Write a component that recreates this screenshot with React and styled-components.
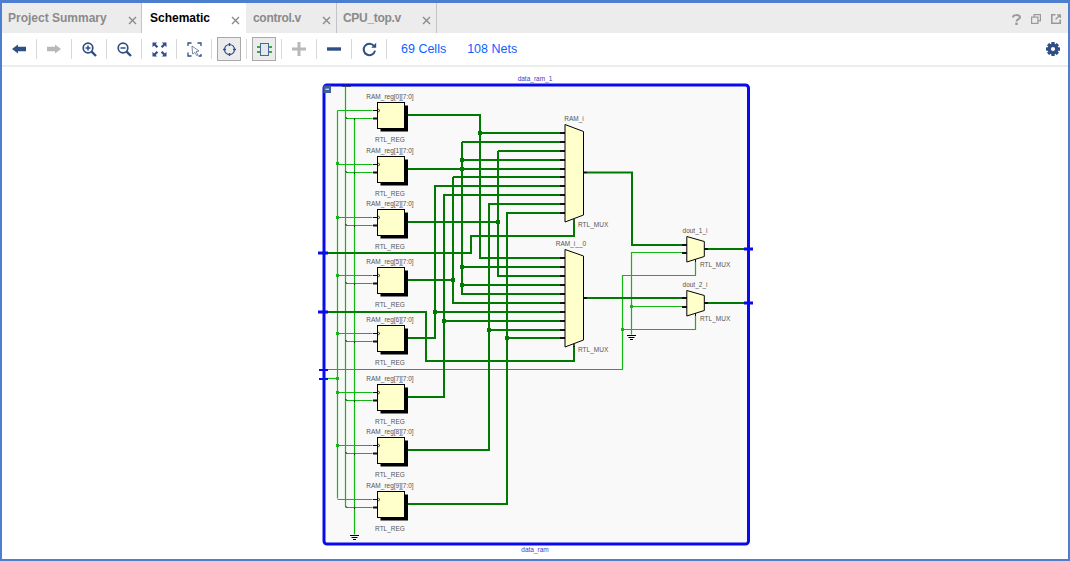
import React from "react";
import styled, { createGlobalStyle } from "styled-components";

const Global = createGlobalStyle`
  html, body { margin: 0; padding: 0; background: #fff; }
  body { font-family: "Liberation Sans", Arial, sans-serif; }
`;
const Frame = styled.div`
  width: 1070px; height: 561px; box-sizing: border-box; overflow: hidden;
  border-top: 3px solid #4d7fcf; border-left: 2px solid #4d7fcf; border-right: 2px solid #4d7fcf; border-bottom: 2px solid #4d7fcf;
  display: flex; flex-direction: column; background: #fff;
`;
const TabBar = styled.div`
  height: 30px; flex: none; background: #ececec; display: flex; align-items: stretch; padding-right: 7px;
`;
const Tab = styled.div`
  display: flex; align-items: center; justify-content: space-between; box-sizing: border-box;
  width: ${p => p.$w}px; padding: 0 ${p => p.$pr}px 0 ${p => p.$pad}px; height: 30px;
  background: ${p => p.$active ? "#fff" : "transparent"};
  border-right: ${p => p.$active ? "none" : "1px solid #c4c4c4"};
  font-size: 12px; font-weight: 700; color: ${p => p.$active ? "#000" : "#8a8a8a"};
  letter-spacing: ${p => p.$ls || 0}px;
`;
const TabClose = styled.svg`
  width: 9px; height: 9px; margin-top: 5px; stroke: #8a8a8a; stroke-width: 1.4; fill: none;
`;
const TabSpacer = styled.div`flex: 1;`;
const WindowIcons = styled.div`display: flex; align-items: center; gap: 10px; padding-top: 2px;`;
const Toolbar = styled.div`
  height: 34px; flex: none; background: #fff; display: flex; align-items: center; padding: 0 8px 0 0;
  border-bottom: 2px solid #ededed; box-sizing: border-box;
`;
const ToolButton = styled.div`
  width: 24px; height: 24px; box-sizing: border-box; margin: 0 5px; flex: none;
  display: flex; align-items: center; justify-content: center;
  ${p => p.$on ? "background:#ececec;border:1px solid #a9a9a9;" : ""}
`;
const Sep = styled.div`width: 1px; height: 20px; background: #d8d8d8; flex: none;`;
const Count = styled.span`font-size: 12.5px; color: #0f5fff; margin-left: ${p => p.$ml}px;`;
const Grow = styled.div`flex: 1;`;
const Canvas = styled.div`flex: 1; min-height: 0; background: #fff;`;
const Schematic = styled.svg`display: block; width: 1066px; height: 492px; overflow: hidden;`;
const ArrowSvg = styled.svg`
  display: block;
  transform: ${p => p.$flip ? "scaleX(-1)" : "none"};
`;

const NAVY = "#2f4f85";
const Arrow = ({ c, flip }) => (
  <ArrowSvg $flip={flip} width="14" height="10" viewBox="0 0 14 10">
    <path d="M0 5 L6 0.5 V2.8 H14 V7.2 H6 V9.5 Z" fill={c} />
  </ArrowSvg>
);
const Zoom = ({ plus }) => (
  <svg width="15" height="15" viewBox="0 0 15 15" fill="none" stroke={NAVY}>
    <circle cx="6" cy="6" r="4.8" strokeWidth="1.7" />
    <path d="M9.6 9.6 L14 14" strokeWidth="2.4" />
    <path d={plus ? "M3.5 6H8.5M6 3.5V8.5" : "M3.5 6H8.5"} strokeWidth="1.5" />
  </svg>
);
const Fit = () => (
  <svg width="15" height="15" viewBox="0 0 15 15" fill={NAVY}>
    <path d="M0.5 0.5H5.2L3.7 2L6.2 4.5L4.6 6.1L2.1 3.6L0.5 5.2Z" />
    <path d="M14.5 0.5H9.8L11.3 2L8.8 4.5L10.4 6.1L12.9 3.6L14.5 5.2Z" />
    <path d="M0.5 14.5H5.2L3.7 13L6.2 10.5L4.6 8.9L2.1 11.4L0.5 9.8Z" />
    <path d="M14.5 14.5H9.8L11.3 13L8.8 10.5L10.4 8.9L12.9 11.4L14.5 9.8Z" />
  </svg>
);
const FitSel = () => (
  <svg width="15" height="15" viewBox="0 0 15 15" fill="none" stroke={NAVY} strokeWidth="1.3">
    <path d="M1 4V1H4.5M10.5 1H14V4M1 10.5V14H4.5M14 12V14H11.5" />
    <path d="M5 4 L12 9 L9 9.6 L11 13 L9.6 13.6 L7.8 10.4 L5.6 12 Z" strokeWidth="0.8" stroke="#5a6d8c" fill="#fff" />
  </svg>
);
const Target = () => (
  <svg width="15" height="15" viewBox="0 0 15 15" fill="none" stroke={NAVY}>
    <circle cx="7.5" cy="7.5" r="5" strokeWidth="1.1" />
    <path d="M7.5 1V4M7.5 11V14M1 7.5H4M11 7.5H14" strokeWidth="1.5" />
  </svg>
);
const Cell = () => (
  <svg width="15" height="13" viewBox="0 0 15 13">
    <path d="M0 4H4M0 9H4M11 4H15M11 9H15" stroke="#2fb02f" strokeWidth="2.2" fill="none" />
    <rect x="3.5" y="0.5" width="8" height="12" fill="#e4e9ef" stroke="#4a6a94" strokeWidth="1" />
  </svg>
);
const Plus = () => (
  <svg width="14" height="14" viewBox="0 0 14 14"><path d="M0 7H14M7 0V14" stroke="#b8b8b8" strokeWidth="3" /></svg>
);
const Minus = () => (
  <svg width="14" height="14" viewBox="0 0 14 14"><path d="M0 7H14" stroke={NAVY} strokeWidth="3.4" /></svg>
);
const Reload = () => (
  <svg width="15" height="15" viewBox="0 0 15 15" fill="none">
    <path d="M12.2 4.3 A5.7 5.7 0 1 0 13 8.6" stroke={NAVY} strokeWidth="2" />
    <path d="M9.2 5.8 H14.2 V0.8 Z" fill={NAVY} />
  </svg>
);
const Gear = () => (
  <svg width="14" height="14" viewBox="0 0 14 14">
    <circle cx="7" cy="7" r="3.9" fill="none" stroke={NAVY} strokeWidth="3" />
    {[0, 45, 90, 135].map(a => (
      <rect key={a} x="5.3" y="0" width="3.4" height="14" rx="0.5" fill={NAVY} transform={`rotate(${a} 7 7)`} />
    ))}
    <circle cx="7" cy="7" r="2.1" fill="#fff" />
  </svg>
);
const Help = () => (
  <svg width="9" height="11" viewBox="0 0 9 11" fill="none" stroke="#999">
    <path d="M1 3.4 C1 0.4 8 0.4 8 3.2 C8 5.2 4.5 5 4.5 7.4" strokeWidth="2" />
    <rect x="3.3" y="8.6" width="2.4" height="2.4" fill="#999" stroke="none" />
  </svg>
);
const Restore = () => (
  <svg width="10" height="10" viewBox="0 0 10 10" fill="#ececec" stroke="#999" strokeWidth="1.2">
    <rect x="3.1" y="0.6" width="6.3" height="6.3" />
    <rect x="0.6" y="3.1" width="6.3" height="6.3" />
  </svg>
);
const Popout = () => (
  <svg width="10" height="10" viewBox="0 0 10 10" fill="none" stroke="#999" strokeWidth="1.6">
    <path d="M4.5 0.8H0.8V9.2H9.2V5.5" />
    <path d="M4.5 5.5L9 1M6 0.8H9.3V4" strokeWidth="1.3" />
  </svg>
);

const THICK = "#007a00";
const THIN = "#12b812";
const BLUE = "#0a0aee";
const regs = [
  { t: 102, n: 0, out: "M407 115H480V258H560" },
  { t: 156, n: 1, out: "M407 169H560" },
  { t: 209, n: 2, out: "M407 222H498" },
  { t: 267, n: 5, out: "M407 280H453" },
  { t: 325, n: 6, out: "M407 338H435V186H560" },
  { t: 384, n: 7, out: "M407 397H444V195H560" },
  { t: 437, n: 8, out: "M407 450H489V204H560" },
  { t: 491, n: 9, out: "M407 504H507V213H560" },
];
const thickWires = [
  "M462 160H560", "M462 142H560", "M462 142V294H560", "M462 267H560", "M462 285H560",
  "M498 151H560", "M498 151V276H560", "M453 177H560", "M453 177V303H560",
  "M480 133H560", "M435 312H560", "M444 321H560", "M489 330H560", "M507 338H560",
  "M322 253H471V236H574V222", "M322 312H426V361H574V346",
  "M587 172.5H632V245H683", "M587 298H683", "M708 249H748", "M708 303H748",
];
const thickDots = [[480,133],[462,160],[462,169],[498,222],[453,280],[462,267],[462,285],[435,312],[444,321],[489,330],[507,338]];
const thinWires = [
  "M338 111V499", "M346 86V507", "M355 119V535",
  "M324 379H338", "M324 370H623V276H696V262", "M623 330H696V316",
  "M632 335V253H683", "M632 307H683",
];
const thinDots = [[338,164],[338,218],[338,276],[338,334],[338,393],[338,446],[338,379],[632,307],[623,330]];
const muxes = [
  { pts: "565,124.5 583.5,131.5 583.5,215 565,222", ins: [133,142,151,160,169,177,186,195,204,213], oy: 172.5, sy: 219 },
  { pts: "565,249.5 583.5,256 583.5,340 565,347", ins: [258,267,276,285,294,303,312,321,330,338], oy: 298, sy: 344 },
];
const smallMuxes = [
  { pts: "686.8,236.5 704.3,241.5 704.3,256.5 686.8,262", ins: [245,253], oy: 249, sy: 259 },
  { pts: "686.8,290.5 704.3,295.5 704.3,310.5 686.8,316", ins: [298,307], oy: 303, sy: 313 },
];
const Label = styled.text`
  font-family: "Liberation Sans", Arial, sans-serif; font-size: 6.5px; fill: ${p => p.$c || "#555"};
  text-anchor: ${p => p.$a || "middle"};
`;
const Ground = ({ x, y }) => (
  <path d={`M${x - 5} ${y + 0.5}H${x + 4}M${x - 3.5} ${y + 2.5}H${x + 2.5}M${x - 2} ${y + 4.5}H${x + 1}`} stroke="#000" strokeWidth="1" fill="none" />
);
const Sq = ({ x, y, c, s }) => <rect x={x - s / 2} y={y - s / 2} width={s} height={s} fill={c} />;

const Drawing = () => (
  <Schematic viewBox="2 67 1066 492">
    <rect x="324" y="85" width="424.5" height="459" rx="3" fill="#f9f9f9" stroke={BLUE} strokeWidth="3" />
    <rect x="323.5" y="85.5" width="7.5" height="7.5" fill="#3d5f9e" />
    <path d="M325.5 89.2H329" stroke="#fff" strokeWidth="1" />
    <Label x="535" y="81" $c="#3c3ccc">data_ram_1</Label>
    <Label x="535" y="552" $c="#3c3ccc">data_ram</Label>

    <g fill="none" stroke={THIN} strokeWidth="1.2" transform="translate(-0.5 -0.5)">
      {thinWires.map(d => <path key={d} d={d} />)}
      {regs.map(r => <path key={r.n} d={`M338 ${r.t + 9}H373M346 ${r.t + 17}H373`} />)}
    </g>
    {thinDots.map(([x, y]) => <Sq key={x + "-" + y} x={x - 0.5} y={y - 0.5} c={THIN} s={3} />)}
    <path d="M342 86H351" stroke="#222" strokeWidth="1.2" />
    <Ground x={355} y={535} />
    <Ground x={632} y={335} />
    {regs.map(r => (
      <path key={r.n} d={`M345.5 ${r.t + 15}L347 ${r.t + 16.5}M354.5 ${r.t + 16.5}V${r.t + 18}`} stroke="#111" strokeWidth="1" fill="none" />
    ))}

    <g fill="none" stroke={THICK} strokeWidth="2">
      {regs.map(r => <path key={r.n} d={r.out} />)}
      {thickWires.map(d => <path key={d} d={d} />)}
    </g>
    {thickDots.map(([x, y]) => <Sq key={x + "-" + y} x={x} y={y} c={THICK} s={4} />)}

    {regs.map(r => (
      <g key={r.n}>
        <rect x="380.5" y={r.t + 3.5} width="27.5" height="26" fill="#000" />
        <rect x="377.5" y={r.t + 0.5} width="27" height="26" fill="#ffffcc" stroke="#000" strokeWidth="1" />
        <path d={`M373 ${r.t + 8.5}H377`} stroke="#111" strokeWidth="1" />
        <path d={`M373 ${r.t + 16.5}H377`} stroke="#111" strokeWidth="2" />
        <path d={`M377.5 ${r.t + 6.5}L380 ${r.t + 8.5}L377.5 ${r.t + 10.5}`} stroke="#000" strokeWidth="0.7" fill="none" />
        <Label x="390" y={r.t - 3}>{`RAM_reg[${r.n}][7:0]`}</Label>
        <Label x="390" y={r.t + 40}>RTL_REG</Label>
      </g>
    ))}

    {muxes.map(m => (
      <g key={m.oy}>
        {m.ins.map(y => <path key={y} d={`M560 ${y}H565`} stroke="#111" strokeWidth="2" />)}
        <path d={`M583 ${m.oy}H587`} stroke="#111" strokeWidth="2" />
        <path d={`M574 ${m.sy}V${m.sy + 3}`} stroke="#111" strokeWidth="1.5" />
        <polygon points={m.pts} fill="#ffffcc" stroke="#000" strokeWidth="1" />
      </g>
    ))}
    {smallMuxes.map(m => (
      <g key={m.oy}>
        {m.ins.map(y => <path key={y} d={`M682 ${y}H687`} stroke="#111" strokeWidth="2" />)}
        <path d={`M704 ${m.oy}H708`} stroke="#111" strokeWidth="2" />
        <path d={`M695.5 ${m.sy}V${m.sy + 3}`} stroke="#111" strokeWidth="1" />
        <polygon points={m.pts} fill="#ffffcc" stroke="#000" strokeWidth="1" />
      </g>
    ))}

    <path d="M318 253H328M318 312H328" stroke={BLUE} strokeWidth="3" />
    <path d="M319 370H328M319 379H328" stroke={BLUE} strokeWidth="2" />
    <path d="M744 249H753M744 303H753" stroke={BLUE} strokeWidth="3" />

    <Label x="574" y="121">RAM_i</Label>
    <Label x="578" y="227" $a="start">RTL_MUX</Label>
    <Label x="571" y="246">RAM_i__0</Label>
    <Label x="578" y="352" $a="start">RTL_MUX</Label>
    <Label x="695" y="233">dout_1_i</Label>
    <Label x="700" y="267" $a="start">RTL_MUX</Label>
    <Label x="695" y="287">dout_2_i</Label>
    <Label x="700" y="321" $a="start">RTL_MUX</Label>
  </Schematic>
);

const Close = () => (
  <TabClose viewBox="0 0 9 9"><path d="M1 1L8 8M8 1L1 8" /></TabClose>
);

const tabs = [
  { name: "Project Summary", w: 140, pad: 6, pr: 4 },
  { name: "Schematic", w: 104, pad: 8, pr: 6, active: true },
  { name: "control.v", w: 91, pad: 7, pr: 5, ls: -0.3 },
  { name: "CPU_top.v", w: 100, pad: 6, pr: 5, ls: -0.3 },
];

export default function App() {
  return (
    <Frame>
      <Global />
      <TabBar>
        {tabs.map(t => (
          <Tab key={t.name} $w={t.w} $pad={t.pad} $pr={t.pr} $active={t.active} $ls={t.ls}>{t.name}<Close /></Tab>
        ))}
        <TabSpacer />
        <WindowIcons><Help /><Restore /><Popout /></WindowIcons>
      </TabBar>
      <Toolbar>
        <ToolButton><Arrow c={NAVY} /></ToolButton>
        <Sep />
        <ToolButton><Arrow c="#b8b8b8" flip /></ToolButton>
        <Sep />
        <ToolButton><Zoom plus /></ToolButton>
        <Sep />
        <ToolButton><Zoom /></ToolButton>
        <Sep />
        <ToolButton><Fit /></ToolButton>
        <Sep />
        <ToolButton><FitSel /></ToolButton>
        <Sep />
        <ToolButton $on><Target /></ToolButton>
        <Sep />
        <ToolButton $on><Cell /></ToolButton>
        <Sep />
        <ToolButton><Plus /></ToolButton>
        <Sep />
        <ToolButton><Minus /></ToolButton>
        <Sep />
        <ToolButton><Reload /></ToolButton>
        <Sep />
        <Count $ml={14}>69 Cells</Count>
        <Count $ml={21}>108 Nets</Count>
        <Grow />
        <Gear />
      </Toolbar>
      <Canvas><Drawing /></Canvas>
    </Frame>
  );
}
